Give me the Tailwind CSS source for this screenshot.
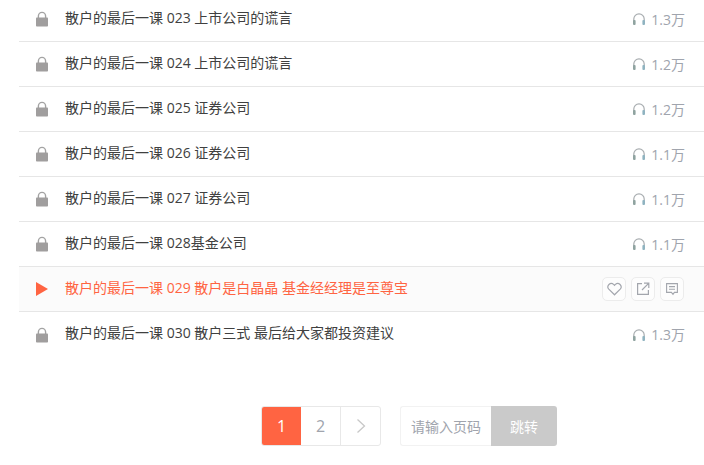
<!DOCTYPE html>
<html lang="en">
<head>
    <meta charset="UTF-8">
    <title>散户的最后一课</title>
    <script src="https://cdn.jsdelivr.net/npm/@tailwindcss/browser@4"></script>
</head>
<body class="bg-white overflow-hidden font-['Open_Sans','Noto_Sans_CJK_SC',sans-serif]">
    <svg class="hidden">
        <symbol id="lock" viewBox="0 0 14 16"><path d="M3.4 8V5a3.6 3.6 0 0 1 7.2 0V8" fill="none" stroke="#a3a3a3" stroke-width="1.4"/><rect x="1" y="6.5" width="12" height="9" rx="0.8" fill="#a09e9e"/></symbol>
        <symbol id="phones" viewBox="0 0 14 14"><path d="M1.8 11V7a5.2 5.2 0 0 1 10.4 0v4" fill="none" stroke="#a8adb0" stroke-width="1.2"/><rect x="1" y="8" width="2.6" height="5" rx="1" fill="#8fa3a0"/><rect x="10.4" y="8" width="2.6" height="5" rx="1" fill="#8fb3c0"/></symbol>
    </svg>

    <!-- Track list -->
    <ul class="-mt-[3px] ml-[19px] text-[14px] text-[#404040]">
        <li class="h-[45px] flex items-center border-b border-[#e6e6e6]">
            <svg class="w-[14px] h-[16px] ml-4"><use href="#lock"/></svg>
            <span class="ml-4 mb-1">散户的最后一课 023 上市公司的谎言</span>
            <span class="ml-auto flex items-center gap-[5px] text-[#a0a4ad] mr-[19px]"><svg class="w-[14px] h-[14px]"><use href="#phones"/></svg>1.3万</span>
        </li>
        <li class="h-[45px] flex items-center border-b border-[#e6e6e6]">
            <svg class="w-[14px] h-[16px] ml-4"><use href="#lock"/></svg>
            <span class="ml-4 mb-1">散户的最后一课 024 上市公司的谎言</span>
            <span class="ml-auto flex items-center gap-[5px] text-[#a0a4ad] mr-[19px]"><svg class="w-[14px] h-[14px]"><use href="#phones"/></svg>1.2万</span>
        </li>
        <li class="h-[45px] flex items-center border-b border-[#e6e6e6]">
            <svg class="w-[14px] h-[16px] ml-4"><use href="#lock"/></svg>
            <span class="ml-4 mb-1">散户的最后一课 025 证券公司</span>
            <span class="ml-auto flex items-center gap-[5px] text-[#a0a4ad] mr-[19px]"><svg class="w-[14px] h-[14px]"><use href="#phones"/></svg>1.2万</span>
        </li>
        <li class="h-[45px] flex items-center border-b border-[#e6e6e6]">
            <svg class="w-[14px] h-[16px] ml-4"><use href="#lock"/></svg>
            <span class="ml-4 mb-1">散户的最后一课 026 证券公司</span>
            <span class="ml-auto flex items-center gap-[5px] text-[#a0a4ad] mr-[19px]"><svg class="w-[14px] h-[14px]"><use href="#phones"/></svg>1.1万</span>
        </li>
        <li class="h-[45px] flex items-center border-b border-[#e6e6e6]">
            <svg class="w-[14px] h-[16px] ml-4"><use href="#lock"/></svg>
            <span class="ml-4 mb-1">散户的最后一课 027 证券公司</span>
            <span class="ml-auto flex items-center gap-[5px] text-[#a0a4ad] mr-[19px]"><svg class="w-[14px] h-[14px]"><use href="#phones"/></svg>1.1万</span>
        </li>
        <li class="h-[45px] flex items-center border-b border-[#e6e6e6]">
            <svg class="w-[14px] h-[16px] ml-4"><use href="#lock"/></svg>
            <span class="ml-4 mb-1">散户的最后一课 028基金公司</span>
            <span class="ml-auto flex items-center gap-[5px] text-[#a0a4ad] mr-[19px]"><svg class="w-[14px] h-[14px]"><use href="#phones"/></svg>1.1万</span>
        </li>
        <li class="h-[45px] flex items-center border-b border-[#e6e6e6] bg-[#fbfbfb] text-[#ff6442]">
            <svg class="w-[14px] h-[16px] ml-4" viewBox="0 0 14 16"><path d="M1 1L13 8L1 15Z" fill="#ff6442"/></svg>
            <span class="ml-4 mb-1">散户的最后一课 029 散户是白晶晶 基金经经理是至尊宝</span>
            <span class="ml-auto flex gap-[5px] mr-5">
                <span class="w-6 h-6 flex items-center justify-center border border-[#ececec] rounded-[5px] bg-[#fdfdfd]">
                    <svg class="w-[15px] h-[14px]" viewBox="0 0 15 14"><path d="M7.5 12.8L1.8 7.2a3.4 3.4 0 0 1 4.8-4.8l.9.9.9-.9a3.4 3.4 0 0 1 4.8 4.8Z" fill="none" stroke="#a3a6ad" stroke-width="1.2"/></svg>
                </span>
                <span class="w-6 h-6 flex items-center justify-center border border-[#ececec] rounded-[5px] bg-[#fdfdfd]">
                    <svg class="w-[14px] h-[14px]" viewBox="0 0 14 14"><path d="M6 1.6H1.6v10.8h10.8V8M8 1.2h4.8V6M12.6 1.4L6 8" fill="none" stroke="#a3a6ad" stroke-width="1.2"/></svg>
                </span>
                <span class="w-6 h-6 flex items-center justify-center border border-[#ececec] rounded-[5px] bg-[#fdfdfd]">
                    <svg class="w-[14px] h-[14px]" viewBox="0 0 14 14"><path d="M1.6 1.6h10.8v8.8H9.4L8 12.4l-1.6-2H1.6ZM4 4.6h6M4 7.2h6" fill="none" stroke="#a3a6ad" stroke-width="1.1"/></svg>
                </span>
            </span>
        </li>
        <li class="h-[45px] flex items-center">
            <svg class="w-[14px] h-[16px] ml-4"><use href="#lock"/></svg>
            <span class="ml-4 mb-1">散户的最后一课 030 散户三式 最后给大家都投资建议</span>
            <span class="ml-auto flex items-center gap-[5px] text-[#a0a4ad] mr-[19px]"><svg class="w-[14px] h-[14px]"><use href="#phones"/></svg>1.3万</span>
        </li>
    </ul>

    <!-- Pagination -->
    <div class="mt-[49px] ml-[261px] flex text-[14px]">
        <div class="flex h-10 w-[120px] border border-[#e8e8e8] rounded-[3px] overflow-hidden text-[16px] text-[#a0a4ad]">
            <span class="w-[39px] flex items-center justify-center bg-[#ff6442] text-white">1</span>
            <span class="w-10 flex items-center justify-center border-r border-[#e8e8e8]">2</span>
            <span class="flex-1 flex items-center justify-center">
                <svg class="w-[10px] h-[16px]" viewBox="0 0 10 16"><path d="M1.5 1.5L8.5 8L1.5 14.5" fill="none" stroke="#c8c8c8" stroke-width="1.3"/></svg>
            </span>
        </div>
        <div class="ml-[19px] flex h-10 w-[157px]">
            <span class="w-[91px] flex items-center justify-center border border-r-0 border-[#f2f2f2] rounded-l-[3px] text-[#a0a4ad]">请输入页码</span>
            <span class="flex-1 flex items-center justify-center bg-[#cacaca] rounded-r-[3px] text-white">跳转</span>
        </div>
    </div>
</body>
</html>
